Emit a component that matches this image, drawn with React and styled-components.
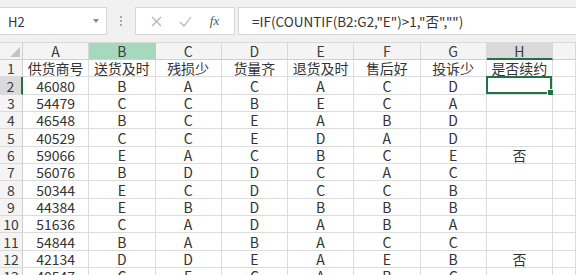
import styled, { createGlobalStyle } from 'styled-components';

const Global = createGlobalStyle`
	html, body {
		margin: 0;
		padding: 0;
		background: #ffffff;
		overflow: hidden;
	}
	body {
		font-family: "Noto Sans CJK SC", "Noto Sans", sans-serif;
		color: #333;
	}
`;

const Window = styled.div`
	width: 576px;
	height: 275px;
	overflow: hidden;
	background: #ffffff;
`;

const FormulaBar = styled.div`
	display: flex;
	align-items: stretch;
	gap: 0;
	height: 43px;
	box-sizing: border-box;
	padding: 7px 0 7px 0;
	background: #f1f1f1;
	border-bottom: 1px solid #dadada;
`;

const NameBox = styled.div`
	display: flex;
	align-items: center;
	justify-content: space-between;
	width: 107px;
	box-sizing: border-box;
	padding: 0 7px 0 8px;
	background: #ffffff;
	border: 1px solid #d6d6d6;
	border-left: none;
	font-size: 13px;
	color: #333;
`;

const Caret = styled.span`
	width: 0;
	height: 0;
	border-left: 3.5px solid transparent;
	border-right: 3.5px solid transparent;
	border-top: 4px solid #8a8a8a;
`;

const Dots = styled.div`
	display: flex;
	flex-direction: column;
	justify-content: center;
	gap: 2px;
	width: 28px;
	align-items: center;

	span {
		width: 2px;
		height: 2px;
		background: #a8a8a8;
	}
`;

const FxButtons = styled.div`
	display: flex;
	align-items: center;
	justify-content: space-around;
	width: 100px;
	box-sizing: border-box;
	padding: 0 6px;
	background: #ffffff;
	border: 1px solid #d6d6d6;
`;

const Fx = styled.span`
	font-family: "Liberation Serif", serif;
	font-style: italic;
	font-size: 13px;
	color: #555;
`;

const FormulaInput = styled.div`
	flex: 1;
	display: flex;
	align-items: center;
	margin-left: 3px;
	padding-left: 13px;
	background: #ffffff;
	border: 1px solid #d6d6d6;
	border-right: none;
	font-size: 13.5px;
	color: #333;
	white-space: nowrap;
`;

const Sheet = styled.div`
	display: grid;
	grid-template-columns: 23px repeat(8, 66.25px) 1fr;
	grid-template-rows: 17px;
	grid-auto-rows: 17.35px;
	font-size: 14px;
	line-height: 1;
`;

const Corner = styled.div`
	position: relative;
	background: #f4f4f4;
	border-right: 1px solid #cfcfcf;
	border-bottom: 1px solid #cfcfcf;
	box-sizing: border-box;

	&::after {
		content: '';
		position: absolute;
		right: 2px;
		bottom: 2px;
		width: 0;
		height: 0;
		border-left: 10px solid transparent;
		border-bottom: 10px solid #c4c4c4;
	}
`;

const ColHead = styled.div`
	display: flex;
	align-items: center;
	justify-content: center;
	box-sizing: border-box;
	background: ${(p) => (p.$ref ? '#a6d8bd' : p.$active ? '#dadada' : '#f4f4f4')};
	border-right: 1px solid ${(p) => (p.$ref ? '#a6d8bd' : '#d8d8d8')};
	border-bottom: ${(p) => (p.$active ? '2px solid #217346' : '1px solid #cfcfcf')};
	color: #3c3c3c;
	font-size: 14px;
`;

const RowHead = styled.div`
	display: flex;
	align-items: center;
	justify-content: center;
	box-sizing: border-box;
	background: ${(p) => (p.$active ? '#dadada' : '#f4f4f4')};
	border-right: ${(p) => (p.$active ? '2px solid #217346' : '1px solid #cfcfcf')};
	border-bottom: 1px solid #dadada;
	color: #3c3c3c;
	font-size: 14px;
`;

const Cell = styled.div`
	position: relative;
	display: flex;
	align-items: center;
	justify-content: center;
	box-sizing: border-box;
	border-right: 1px solid #dcdcdc;
	border-bottom: 1px solid #dcdcdc;
	color: #333;
	white-space: nowrap;
	overflow: visible;
`;

const Selection = styled.div`
	position: absolute;
	left: -1px;
	top: -1px;
	right: 0;
	bottom: 0;
	border: 2px solid #217346;

	&::after {
		content: '';
		position: absolute;
		right: -4px;
		bottom: -4px;
		width: 5px;
		height: 5px;
		background: #217346;
		border: 1px solid #ffffff;
	}
`;

const cols = ['A', 'B', 'C', 'D', 'E', 'F', 'G', 'H', ''];

const rows = [
	['供货商号', '送货及时', '残损少', '货量齐', '退货及时', '售后好', '投诉少', '是否续约'],
	['46080', 'B', 'A', 'C', 'A', 'C', 'D', ''],
	['54479', 'C', 'C', 'B', 'E', 'C', 'A', ''],
	['46548', 'B', 'C', 'E', 'A', 'B', 'D', ''],
	['40529', 'C', 'C', 'E', 'D', 'A', 'D', ''],
	['59066', 'E', 'A', 'C', 'B', 'C', 'E', '否'],
	['56076', 'B', 'D', 'D', 'C', 'A', 'C', ''],
	['50344', 'E', 'C', 'D', 'C', 'C', 'B', ''],
	['44384', 'E', 'B', 'D', 'B', 'B', 'B', ''],
	['51636', 'C', 'A', 'D', 'A', 'B', 'A', ''],
	['54844', 'B', 'A', 'B', 'A', 'C', 'C', ''],
	['42134', 'D', 'D', 'E', 'A', 'E', 'B', '否'],
	['40547', 'C', 'E', 'C', 'A', 'B', 'C', ''],
];

export default function App() {
	return (
		<Window>
			<Global />
			<FormulaBar>
				<NameBox>
					H2
					<Caret />
				</NameBox>
				<Dots>
					<span />
					<span />
					<span />
				</Dots>
				<FxButtons>
					<svg width="11" height="11" viewBox="0 0 11 11">
						<path d="M1 1 L10 10 M10 1 L1 10" stroke="#b4b4b4" strokeWidth="1.2" fill="none" />
					</svg>
					<svg width="13" height="11" viewBox="0 0 13 11">
						<path d="M1 6 L5 10 L12 1" stroke="#b4b4b4" strokeWidth="1.2" fill="none" />
					</svg>
					<Fx>fx</Fx>
				</FxButtons>
				<FormulaInput>=IF(COUNTIF(B2:G2,"E")&gt;1,"否","")</FormulaInput>
			</FormulaBar>
			<Sheet>
				<Corner />
				{cols.map((c, i) => (
					<ColHead key={i} $ref={c === 'B'} $active={c === 'H'}>
						{c}
					</ColHead>
				))}
				{rows.map((r, ri) => (
					<>
						<RowHead key={'h' + ri} $active={ri === 1}>
							{ri + 1}
						</RowHead>
						{r.map((v, ci) => (
							<Cell key={ri + '-' + ci}>
								{v}
								{ri === 1 && ci === 7 && <Selection />}
							</Cell>
						))}
						<Cell key={ri + '-x'} />
					</>
				))}
			</Sheet>
		</Window>
	);
}
